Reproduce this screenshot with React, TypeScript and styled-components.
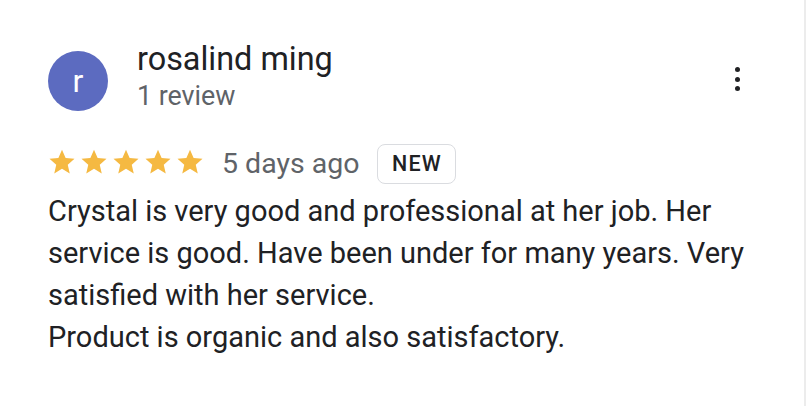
import React from "react";
import styled, { createGlobalStyle } from "styled-components";

const GlobalStyle = createGlobalStyle`
  html, body {
    margin: 0;
    padding: 0;
    background: #ffffff;
  }
  body {
    font-family: Roboto, "Noto Sans", Arial, sans-serif;
    -webkit-font-smoothing: antialiased;
  }
`;

const Page = styled.div`
  width: 806px;
  height: 406px;
  box-sizing: border-box;
  border-right: 2px solid #ececec;
  background: #fff;
`;

const Card = styled.article`
  box-sizing: border-box;
  padding: 41px 0 0 48px;
  width: 804px;
  display: flex;
  flex-direction: column;
`;

const Header = styled.header`
  display: flex;
  align-items: flex-start;
`;

const Avatar = styled.div`
  width: 60px;
  height: 60px;
  margin-top: 10px;
  border-radius: 50%;
  background: #5c6bc0;
  color: #fff;
  display: flex;
  align-items: center;
  justify-content: center;
  font-size: 32px;
  font-weight: 400;
  flex-shrink: 0;
`;

const Author = styled.div`
  display: flex;
  flex-direction: column;
  margin-left: 29px;
  flex: 1;
`;

const Name = styled.div`
  font-size: 32.4px;
  line-height: 36px;
  color: #202124;
`;

const Meta = styled.div`
  margin-top: 3px;
  font-size: 26.8px;
  line-height: 32px;
  color: #5f6368;
`;

const MoreButton = styled.button`
  border: 0;
  background: none;
  padding: 0;
  margin: 26px 61px 0 0;
  width: 12px;
  height: 24px;
  display: flex;
  flex-direction: column;
  align-items: center;
  justify-content: space-between;
  cursor: pointer;
`;

const Dot = styled.span`
  width: 5px;
  height: 5px;
  border-radius: 50%;
  background: #202124;
`;

const RatingRow = styled.div`
  display: flex;
  align-items: center;
  margin-top: 31px;
  height: 41px;
`;

const Stars = styled.div`
  display: flex;
  gap: 2px;
  margin: 0 0 4px -1px;
`;

const Star = styled.svg`
  width: 30px;
  height: 30px;
  display: block;
`;

const When = styled.span`
  font-size: 28.5px;
  color: #5f6368;
  margin-left: 17px;
`;

const Badge = styled.span`
  margin-left: 18px;
  box-sizing: border-box;
  height: 40px;
  padding: 0 13.5px;
  display: flex;
  align-items: center;
  border: 1.5px solid #dadce0;
  border-radius: 8px;
  font-size: 21.5px;
  font-weight: 500;
  letter-spacing: 1.2px;
  color: #202124;
`;

const Body = styled.p`
  margin: 6px 0 0;
  width: 730px;
  font-size: 29px;
  line-height: 42px;
  color: #202124;
  white-space: pre-line;
`;

const StarIcon = () => (
  <Star viewBox="0 0 24 24">
    <path
      fill="#f5b942"
      d="M12 2.2l2.9 6.6 7.1.6-5.4 4.7 1.6 7-6.2-3.7-6.2 3.7 1.6-7L2 9.4l7.1-.6z"
    />
  </Star>
);

export default function App() {
  return (
    <>
      <GlobalStyle />
      <Page>
        <Card>
          <Header>
            <Avatar>r</Avatar>
            <Author>
              <Name>rosalind ming</Name>
              <Meta>1 review</Meta>
            </Author>
            <MoreButton aria-label="More">
              <Dot />
              <Dot />
              <Dot />
            </MoreButton>
          </Header>
          <RatingRow>
            <Stars>
              {[0, 1, 2, 3, 4].map((i) => (
                <StarIcon key={i} />
              ))}
            </Stars>
            <When>5 days ago</When>
            <Badge>NEW</Badge>
          </RatingRow>
          <Body>
            {"Crystal is very good and professional at her job. Her service is good. Have been under for many years. Very satisfied with her service.\nProduct is organic and also satisfactory."}
          </Body>
        </Card>
      </Page>
    </>
  );
}
